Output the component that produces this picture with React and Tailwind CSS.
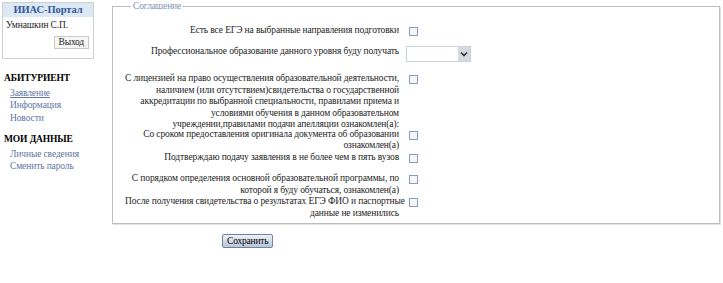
import React from 'react';

const Check = () => (
  <span className="mt-[2px] block h-[9px] w-[9px] shrink-0 border border-[#8c9db6] bg-[#f4f6f9]" />
);

function Row({ children, extra = '', control }) {
  return (
    <div className={`flex items-start ${extra}`}>
      <div className="w-[274px] whitespace-nowrap text-right">{children}</div>
      <div className="ml-[10px]">{control || <Check />}</div>
    </div>
  );
}

export default function App() {
  return (
    <div className="flex h-[283px] w-[723px] bg-white font-['Liberation_Serif','Times_New_Roman',serif] text-[9.5px] leading-[11.5px] tracking-[-0.12px] text-[#1e1e1e]">
      {/* Sidebar */}
      <div className="w-[112px] shrink-0 pl-[2px] pt-[2px]">
        <div className="w-[92px] border border-[#cfcfcf] pb-[9px]">
          <div className="bg-[#dce8f4] py-[1px] text-center text-[10.5px] font-bold tracking-[-0.1px] text-[#35589a]">
            ИИАС-Портал
          </div>
          <div className="px-[3px] pt-[3px]">Умнашкин С.П.</div>
          <div className="flex justify-end pr-[4px] pt-[5px]">
            <button className="h-[13px] border border-[#c9c9c9] bg-[#f6f6f6] px-[4px] font-['Liberation_Serif',serif] text-[9.5px] leading-[11px] tracking-[-0.2px]">
              Выход
            </button>
          </div>
        </div>

        <div className="mt-[14px] pl-[2px] font-bold text-black">АБИТУРИЕНТ</div>
        <div className="mt-[3px] flex flex-col gap-[1px] pl-[8px] text-[#6275a4]">
          <span className="underline">Заявление</span>
          <span>Информация</span>
          <span>Новости</span>
        </div>
        <div className="mt-[10px] pl-[2px] font-bold text-black">МОИ ДАННЫЕ</div>
        <div className="mt-[3px] flex flex-col gap-[1px] pl-[8px] text-[#6275a4]">
          <span>Личные сведения</span>
          <span>Сменить пароль</span>
        </div>
      </div>

      {/* Main */}
      <div className="flex-1 pr-[3px]">
        <fieldset className="mt-[1px] h-[223px] border border-[#bdbdbd] pl-[12px] shadow-[1px_1px_0_#e2e2e2]">
          <legend className="ml-[6px] px-[2px] text-[#7e90b3]">Соглашение</legend>

          <Row extra="mt-[12px]">Есть все ЕГЭ на выбранные направления подготовки</Row>

          <Row
            extra="mt-[10px] items-center"
            control={
              <div className="-ml-[3px] flex h-[16px] w-[65px] border border-[#c9d3de] bg-white">
                <div className="flex-1" />
                <div className="flex w-[12px] items-center justify-center bg-[#d6dae0]">
                  <svg width="8" height="6" viewBox="0 0 8 6">
                    <path d="M1 1.5 L4 4.5 L7 1.5" fill="none" stroke="#333" strokeWidth="1.6" />
                  </svg>
                </div>
              </div>
            }
          >
            Профессиональное образование данного уровня буду получать
          </Row>

          <Row extra="mt-[11px]">
            С лицензией на право осуществления образовательной деятельности,
            <br />
            наличием (или отсутствием)свидетельства о государственной
            <br />
            аккредитации по выбранной специальности, правилами приема и
            <br />
            условиями обучения в данном образовательном
            <br />
            учреждении,правилами подачи апелляции ознакомлен(а):
          </Row>

          <Row extra="-mt-[2px]">
            Со сроком предоставления оригинала документа об образовании
            <br />
            ознакомлен(а)
          </Row>

          <Row>Подтверждаю подачу заявления в не более чем в пять вузов</Row>

          <Row extra="mt-[10px]">
            С порядком определения основной образовательной программы, по
            <br />
            которой я буду обучаться, ознакомлен(а)
          </Row>

          <Row>
            После получения свидетельства о результатах ЕГЭ ФИО и паспортные
            <br />
            данные не изменились
          </Row>
        </fieldset>

        <div className="mt-[10px] pl-[110px]">
          <button className="h-[14px] rounded-[2px] border border-[#7082a3] bg-gradient-to-b from-[#eef2f8] to-[#b9c5d9] px-[4px] font-['Liberation_Serif',serif] text-[9.5px] leading-[11px] tracking-[-0.2px] text-black">
            Сохранить
          </button>
        </div>
      </div>
    </div>
  );
}
